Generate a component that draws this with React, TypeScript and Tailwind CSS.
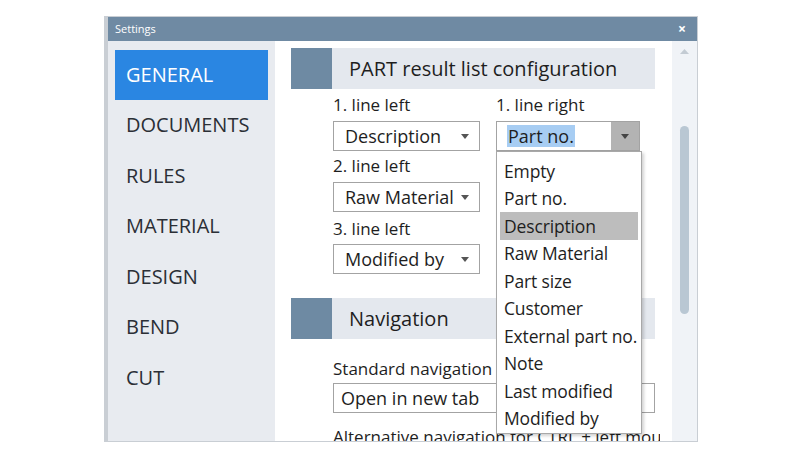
import React from "react";

const MENU = ["GENERAL", "DOCUMENTS", "RULES", "MATERIAL", "DESIGN", "BEND", "CUT"];

const OPTIONS = [
  "Empty",
  "Part no.",
  "Description",
  "Raw Material",
  "Part size",
  "Customer",
  "External part no.",
  "Note",
  "Last modified",
  "Modified by",
];

function Caret({ color = "#555" }: { color?: string }) {
  return (
    <svg width="8" height="5" viewBox="0 0 8 5">
      <path d="M0 0 L8 0 L4 5 Z" fill={color} />
    </svg>
  );
}

function SectionHeader({ title }: { title: string }) {
  return (
    <div className="flex h-[41px] w-[364px]">
      <div className="w-[41px] bg-[#6e8aa3]" />
      <div className="flex-1 bg-[#e4e8ee] pl-[17px] flex items-center text-[20px] text-[#1e1e1e]">
        {title}
      </div>
    </div>
  );
}

function Select({ value }: { value: string }) {
  return (
    <div className="h-[30px] w-[147px] border border-[#a3a3a3] bg-white flex items-center justify-between pl-[11px] pr-[10px] text-[18px] text-[#1e1e1e]">
      <span>{value}</span>
      <Caret />
    </div>
  );
}

export default function App() {
  return (
    <div
      className="w-[800px] h-[451px] bg-white overflow-hidden pt-[16px] pl-[104px]"
      style={{ fontFamily: '"Open Sans", "Noto Sans", sans-serif' }}
    >
      <div className="w-[594px] h-[426px] border border-[#c9ced4] border-l-[4px] flex flex-col">
        {/* title bar */}
        <div className="h-[24px] bg-[#6f8aa3] flex items-center justify-between pl-[7px] pr-[11px] text-white">
          <span className="text-[11px]">Settings</span>
          <span className="text-[14px] font-bold leading-none">×</span>
        </div>

        <div className="flex flex-1 min-h-0">
          {/* sidebar */}
          <div className="w-[167px] bg-[#e8ebf0] pt-[9px] pl-[7px] pr-[7px]">
            {MENU.map((m, i) => (
              <div
                key={m}
                className={
                  "h-[50.5px] pl-[11px] flex items-center text-[20px] " +
                  (i === 0 ? "bg-[#2a86e2] text-white h-[50px]" : "text-[#2b2f36]")
                }
              >
                {m}
              </div>
            ))}
          </div>

          {/* content */}
          <div className="flex-1 relative overflow-hidden pl-[16px] pt-[7px] text-[#1e1e1e]">
            <SectionHeader title="PART result list configuration" />

            <div className="pl-[42px] flex gap-[16px]">
              <div className="w-[147px]">
                <div className="h-[22px] mt-[5px] text-[17px] leading-[22px]">1. line left</div>
                <div className="mt-[5px]"><Select value="Description" /></div>
                <div className="h-[22px] mt-[4px] text-[17px] leading-[22px]">2. line left</div>
                <div className="mt-[5px]"><Select value="Raw Material" /></div>
                <div className="h-[22px] mt-[6px] text-[17px] leading-[22px]">3. line left</div>
                <div className="mt-[4px]"><Select value="Modified by" /></div>
              </div>

              <div className="w-[146px] relative z-10">
                <div className="h-[22px] mt-[5px] text-[17px] leading-[22px]">1. line right</div>
                <div className="mt-[5px] h-[30px] w-[144px] border border-[#a3a3a3] bg-white flex items-center text-[18px]">
                  <span className="ml-[10px] bg-[#a7cdf3] px-[1px] leading-[22px]">Part no.</span>
                  <div className="ml-auto h-full w-[28px] bg-[#b3b3b3] flex items-center justify-center">
                    <Caret color="#444" />
                  </div>
                </div>
                <div className="absolute left-0 top-[62px] w-[146px] bg-white border border-[#a8a8a8] shadow-[2px_2px_3px_rgba(0,0,0,0.18)] pt-[5px] pb-[1px] px-[3px]">
                  {OPTIONS.map((o) => (
                    <div
                      key={o}
                      className={
                        "h-[27.5px] pl-[4px] flex items-center text-[17.5px] tracking-[-0.15px] whitespace-nowrap " +
                        (o === "Description" ? "bg-[#bdbdbd]" : "")
                      }
                    >
                      {o}
                    </div>
                  ))}
                </div>
              </div>
            </div>

            <div className="mt-[24px]">
              <SectionHeader title="Navigation" />
            </div>

            <div className="pl-[42px]">
              <div className="h-[22px] mt-[19px] text-[17px] leading-[22px] whitespace-nowrap">Standard navigation</div>
              <div className="mt-[3px] h-[30px] w-[322px] border border-[#a3a3a3] flex items-center pl-[7px] text-[18px]">
                Open in new tab
              </div>
              <div className="w-[327px] overflow-hidden h-[22px] mt-[13px] text-[17px] leading-[22px] whitespace-nowrap">
                Alternative navigation for CTRL + left mouse click
              </div>
            </div>
          </div>

          {/* scrollbar */}
          <div className="w-[25px] bg-[#f0f3f7] flex flex-col items-center pt-[8px]">
            <svg width="9" height="5" viewBox="0 0 9 5">
              <path d="M0 5 L9 5 L4.5 0 Z" fill="#c3cbd3" />
            </svg>
            <div className="mt-[72px] w-[9px] h-[188px] rounded-full bg-[#b9c7d3]" />
          </div>
        </div>
      </div>
    </div>
  );
}
